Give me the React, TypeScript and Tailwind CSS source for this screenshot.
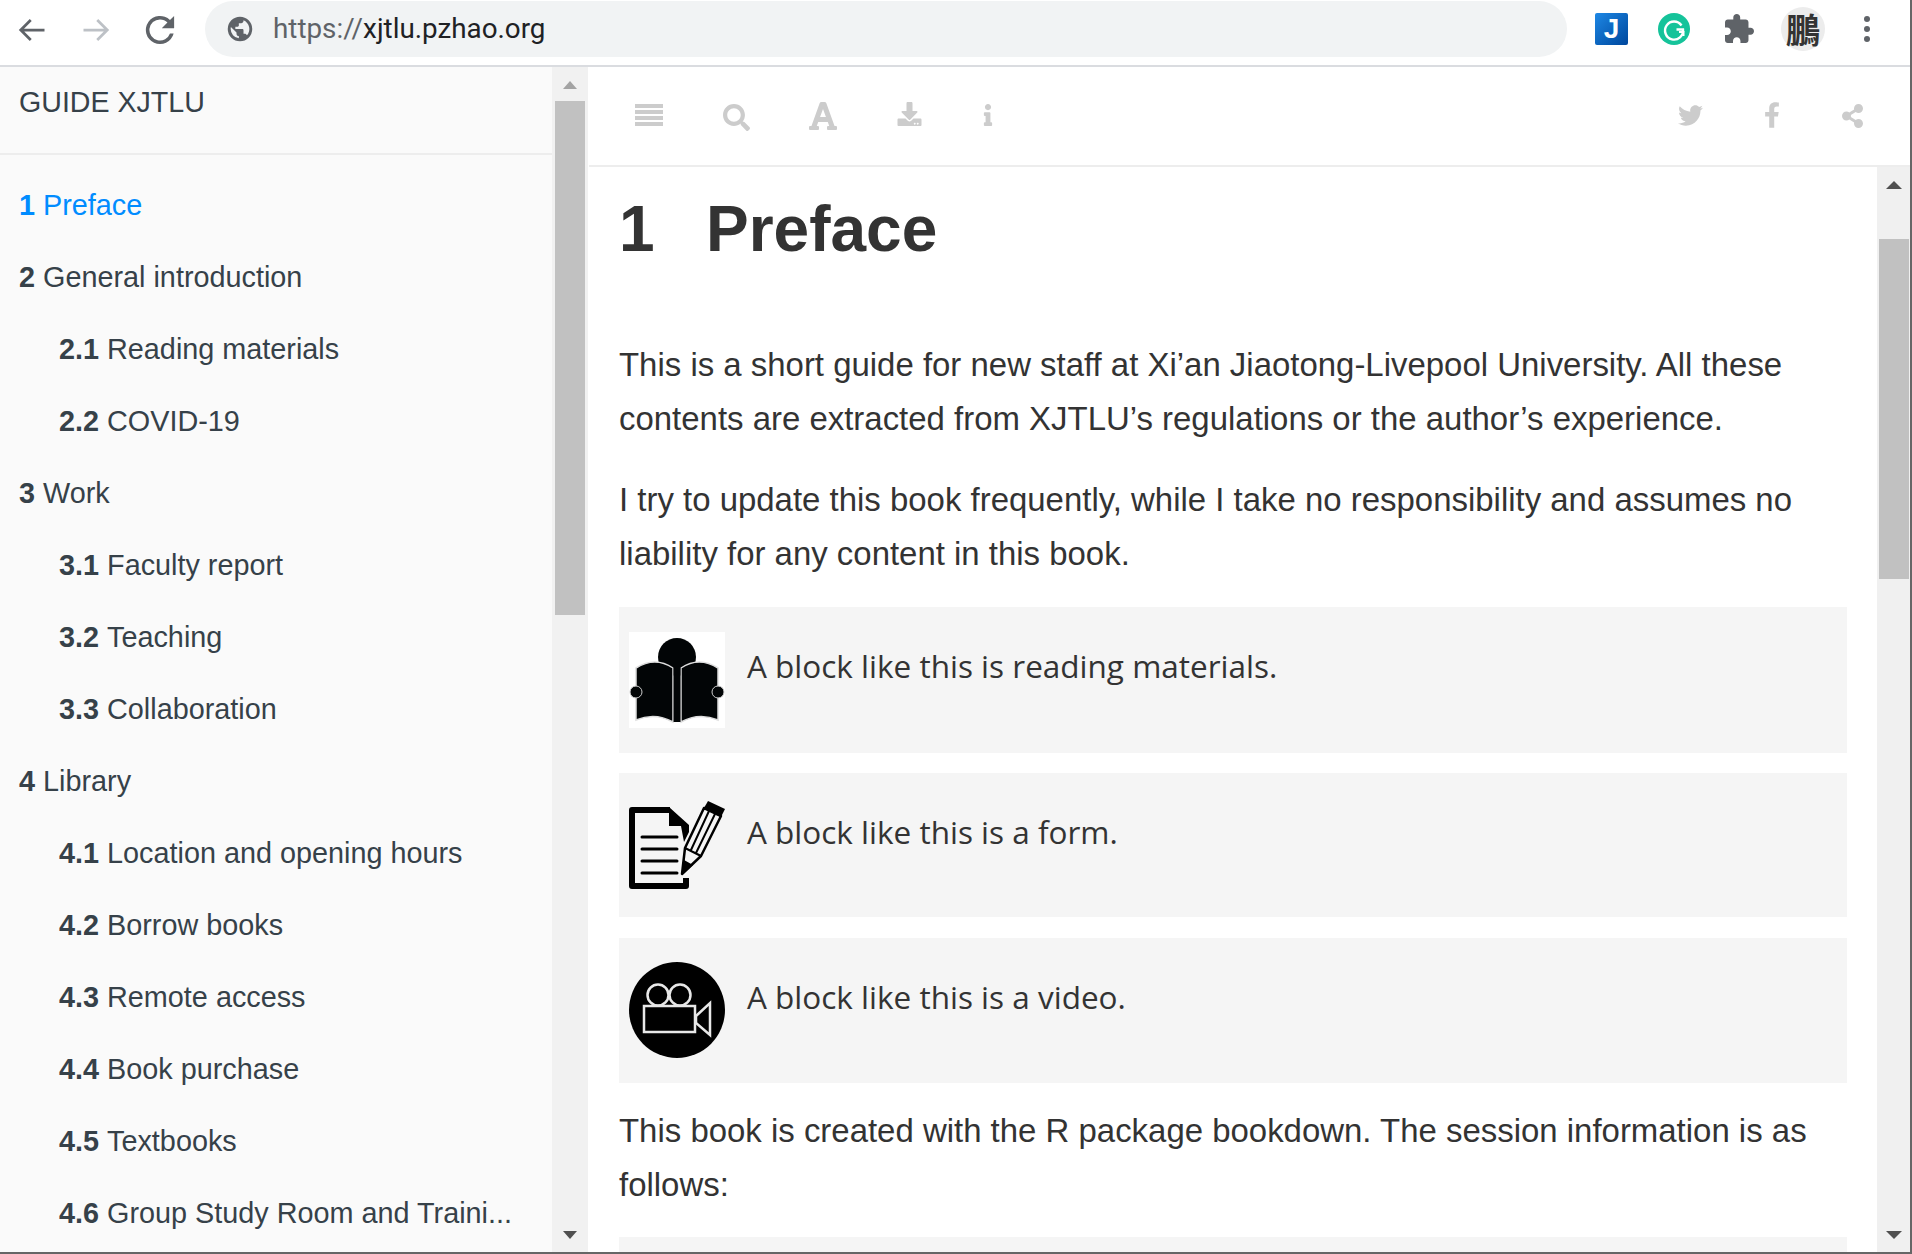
import React from "react";
import { FaTwitter, FaFacebookF, FaShareAlt, FaSearch, FaFont, FaInfo, FaDownload } from "react-icons/fa";

const toc: { num: string; label: string; sub?: boolean; active?: boolean }[] = [
  { num: "1", label: "Preface", active: true },
  { num: "2", label: "General introduction" },
  { num: "2.1", label: "Reading materials", sub: true },
  { num: "2.2", label: "COVID-19", sub: true },
  { num: "3", label: "Work" },
  { num: "3.1", label: "Faculty report", sub: true },
  { num: "3.2", label: "Teaching", sub: true },
  { num: "3.3", label: "Collaboration", sub: true },
  { num: "4", label: "Library" },
  { num: "4.1", label: "Location and opening hours", sub: true },
  { num: "4.2", label: "Borrow books", sub: true },
  { num: "4.3", label: "Remote access", sub: true },
  { num: "4.4", label: "Book purchase", sub: true },
  { num: "4.5", label: "Textbooks", sub: true },
  { num: "4.6", label: "Group Study Room and Traini...", sub: true },
];

function ReaderIcon() {
  return (
    <svg viewBox="0 0 96 96" className="w-[96px] h-[96px] bg-white shrink-0">
      <circle cx="48" cy="25" r="19" fill="#020506" />
      <path d="M7 36 Q26 24 44 36 L44 90 Q26 80 7 88 Z" fill="#020506" stroke="#ddd" strokeWidth="1.5" />
      <path d="M89 36 Q70 24 52 36 L52 90 Q70 80 89 88 Z" fill="#020506" stroke="#ddd" strokeWidth="1.5" />
      <rect x="44.5" y="35" width="7" height="55" fill="#020506" />
      <circle cx="7" cy="60" r="6" fill="#020506" stroke="#ccc" strokeWidth="1" />
      <circle cx="89" cy="60" r="6" fill="#020506" stroke="#ccc" strokeWidth="1" />
    </svg>
  );
}

function FormIcon() {
  return (
    <svg viewBox="0 0 96 96" className="w-[96px] h-[96px] shrink-0">
      <path d="M57 80 V88 H3 V12 H41" fill="none" stroke="#000" strokeWidth="6" strokeLinejoin="round" />
      <path d="M40 9 L60 27 V34 L55 44 L52 28 H40 Z" fill="#000" />
      <path d="M13 39 H48 M13 51 H48 M13 63 H48 M13 75 H48" stroke="#000" strokeWidth="3" strokeLinecap="round" />
      <path d="M75 10 L92 18 L72 58 L53 76 L56 50 Z" fill="#f5f5f5" stroke="#000" strokeWidth="2.5" strokeLinejoin="round" />
      <path d="M80 13 L62 52 M86 16 L67 55 M56 50 L72 58" fill="none" stroke="#000" strokeWidth="2" />
      <path d="M79 3 L96 11 L92 19 L75 10 Z" fill="#000" />
      <path d="M53 77 L55 62 L64 67 Z" fill="#000" />
    </svg>
  );
}

function VideoIcon() {
  return (
    <svg viewBox="0 0 96 96" className="w-[96px] h-[96px] -mt-[1px] shrink-0">
      <circle cx="48" cy="48" r="48" fill="#000" />
      <g fill="none" stroke="#e8e8e8" strokeWidth="2.5">
        <circle cx="29" cy="33" r="10.5" />
        <circle cx="51" cy="33" r="10.5" />
        <rect x="15" y="44" width="51" height="26" />
        <path d="M67 54 L81 41 V73 L67 61 Z" />
      </g>
    </svg>
  );
}

function Note({ icon, text, cls }: { icon: React.ReactNode; text: string; cls: string }) {
  return (
    <div className={`flex bg-[#f5f5f5] pl-[10px] pt-[25px] ${cls}`}>
      {icon}
      <span className="ml-[22px] mt-[7px] h-[54px] text-[31.5px] leading-[54px] font-['Open_Sans',sans-serif] text-[#333]">{text}</span>
    </div>
  );
}

export default function App() {
  return (
    <div className="w-[1912px] h-[1254px] overflow-hidden flex flex-col bg-white border-r-2 border-[#666] font-['Liberation_Sans',sans-serif]">
      {/* browser chrome */}
      <div className="h-[67px] shrink-0 flex items-start border-b-2 border-[#dadce0]">
        <div className="flex items-center h-[57px] pl-[17px] mt-[1px] gap-[34px] w-[205px]">
          <svg viewBox="0 0 24 24" className="w-[30px] h-[30px]" fill="none" stroke="#5f6368" strokeWidth="2.2"><path d="M22 12H3M11 4l-8 8 8 8" /></svg>
          <svg viewBox="0 0 24 24" className="w-[30px] h-[30px]" fill="none" stroke="#bdc1c6" strokeWidth="2.2"><path d="M2 12h19M13 4l8 8-8 8" /></svg>
          <svg viewBox="3.5 3.5 17 17" className="w-[30px] h-[30px]" fill="#5f6368"><path d="M17.65 6.35A8 8 0 1 0 19.73 14h-2.08A6 6 0 1 1 12 6c1.66 0 3.14.69 4.22 1.78L13 11h7V4l-2.35 2.35z" /></svg>
        </div>
        <div className="w-[1362px] h-[56px] mt-[1px] rounded-[28px] bg-[#f1f3f4] flex items-center pl-[21px]">
          <svg viewBox="0 0 24 24" className="w-[28px] h-[28px]" fill="#5f6368"><path d="M12 1.5a10.5 10.5 0 1 0 0 21 10.5 10.5 0 0 0 0-21zM4 12c0-.6.07-1.2.2-1.8L9 15v1c0 1.1.9 2 2 2v1.9A8 8 0 0 1 4 12zm13.9 5.4c-.26-.8-1-1.4-1.9-1.4h-1v-3c0-.55-.45-1-1-1H8v-2h2c.55 0 1-.45 1-1V7h2c1.1 0 2-.9 2-2v-.4a8 8 0 0 1 2.9 12.8z" /></svg>
          <span className="ml-[19px] text-[27.8px] font-['Roboto',sans-serif] text-[#5f6368]">https://<span className="text-[#202124]">xjtlu.pzhao.org</span></span>
        </div>
        <div className="flex-1 relative h-[65px]">
          <div className="absolute left-[28px] top-[13px] w-[33px] h-[32px] rounded-[2px] bg-gradient-to-br from-[#1e88e5] to-[#01479d] flex items-center justify-center text-white font-bold text-[28px] font-['Liberation_Sans',sans-serif]">J</div>
          <svg viewBox="0 0 32 32" className="absolute left-[91px] top-[13px] w-[32px] h-[32px]"><circle cx="16" cy="16" r="16" fill="#15c39a" /><path d="M23.5 12.5A9 9 0 1 0 25 16.5h-6.5" fill="none" stroke="#fff" strokeWidth="2.4" /><path d="M21 19l4.5 0-0 4" fill="none" stroke="#fff" strokeWidth="2" /></svg>
          <svg viewBox="2 1 21 21" className="absolute left-[158px] top-[14px] w-[29px] h-[29px]" fill="#5f6368"><path d="M20.5 11H19V7c0-1.1-.9-2-2-2h-4V3.5C13 2.12 11.88 1 10.5 1S8 2.12 8 3.5V5H4c-1.1 0-1.99.9-1.99 2v3.8H3.5c1.49 0 2.7 1.21 2.7 2.7s-1.21 2.7-2.7 2.7H2V20c0 1.1.9 2 2 2h3.8v-1.5c0-1.49 1.21-2.7 2.7-2.7 1.49 0 2.7 1.21 2.7 2.7V22H17c1.1 0 2-.9 2-2v-4h1.5c1.38 0 2.5-1.12 2.5-2.5S21.88 11 20.5 11z" /></svg>
          <div className="absolute left-[214px] top-[7px] w-[44px] h-[44px] rounded-full bg-[#ececec] flex items-center justify-center text-[#333] text-[34px] leading-none font-['Noto_Sans_CJK_TC',sans-serif] font-bold">鵬</div>
          <div className="absolute left-[297px] top-[16px] flex flex-col gap-[4px]">
            <div className="w-[6px] h-[6px] rounded-full bg-[#5f6368]" />
            <div className="w-[6px] h-[6px] rounded-full bg-[#5f6368]" />
            <div className="w-[6px] h-[6px] rounded-full bg-[#5f6368]" />
          </div>
        </div>
      </div>

      <div className="flex-1 flex min-h-0">
        {/* sidebar */}
        <div className="w-[552px] shrink-0 bg-[#fafafa] overflow-hidden">
          <div className="h-[88px] border-b-2 border-[#ededed] pl-[19px] pt-[15px] text-[28.6px] leading-[40px] text-[#364149]">GUIDE XJTLU</div>
          <ul className="pt-[15px]">
            {toc.map((item) => (
              <li
                key={item.num}
                className={`h-[72px] flex items-center text-[28.8px] whitespace-nowrap ${item.sub ? "pl-[59px]" : "pl-[19px]"} ${item.active ? "text-[#008cff]" : "text-[#364149]"}`}
              >
                <b className="mr-[8px]">{item.num}</b>
                {item.label}
              </li>
            ))}
          </ul>
        </div>
        {/* sidebar scrollbar */}
        <div className="w-[36px] shrink-0 bg-[#f1f1f1] flex flex-col items-center relative">
          <div className="w-0 h-0 mt-[14px] border-x-[7px] border-x-transparent border-b-[8px] border-b-[#a3a3a3]" />
          <div className="w-[30px] h-[514px] mt-[12px] bg-[#c1c1c1]" />
          <div className="absolute bottom-[13px] w-0 h-0 border-x-[7px] border-x-transparent border-t-[8px] border-t-[#505050]" />
        </div>
        {/* main */}
        <div className="flex-1 flex flex-col min-w-0 ml-[1px]">
          <div className="h-[100px] shrink-0 border-b-2 border-[#ededed] relative text-[#cccccc]">
            <svg viewBox="0 0 28 22" className="absolute left-[46px] top-[37px] w-[28px] h-[22px]" fill="#cccccc">
              <rect width="28" height="4" />
              <rect y="6" width="28" height="4" />
              <rect y="12" width="28" height="4" />
              <rect y="18" width="28" height="4" />
            </svg>
            <FaSearch className="absolute left-[134px] top-[37px] w-[27px] h-[27px]" />
            <FaFont className="absolute left-[218px] top-[33px] w-[32px] h-[32px]" />
            <FaDownload className="absolute left-[307px] top-[35px] w-[27px] h-[24px]" />
            <FaInfo className="absolute left-[393px] top-[37px] w-[12px] h-[22px]" />
            <FaTwitter className="absolute left-[1089px] top-[36px] w-[25px] h-[25px]" />
            <FaFacebookF className="absolute left-[1175px] top-[35px] w-[16px] h-[26px]" />
            <FaShareAlt className="absolute left-[1251px] top-[37px] w-[25px] h-[24px]" />
          </div>
          <div className="flex-1 flex min-h-0">
            <div className="flex-1 min-w-0 pl-[30px] pr-[30px] overflow-hidden">
              <h1 className="mt-[25px] text-[64px] leading-[74px] font-bold text-[#333] flex">
                <span className="w-[87px]">1</span>Preface
              </h1>
              <p className="mt-[72px] text-[32.95px] leading-[54px] text-[#333] whitespace-nowrap">This is a short guide for new staff at Xi’an Jiaotong-Livepool University. All these<br />contents are extracted from XJTLU’s regulations or the author’s experience.</p>
              <p className="mt-[27px] text-[32.95px] leading-[54px] text-[#333] whitespace-nowrap">I try to update this book frequently, while I take no responsibility and assumes no<br />liability for any content in this book.</p>
              <Note icon={<ReaderIcon />} text="A block like this is reading materials." cls="mt-[26px] h-[146px]" />
              <Note icon={<FormIcon />} text="A block like this is a form." cls="mt-[20px] h-[144px]" />
              <Note icon={<VideoIcon />} text="A block like this is a video." cls="mt-[21px] h-[145px]" />
              <p className="mt-[21px] text-[32.95px] leading-[54px] text-[#333] whitespace-nowrap">This book is created with the R package bookdown. The session information is as<br />follows:</p>
              <div className="mt-[25px] h-[40px] bg-[#f5f5f5]" />
            </div>
            <div className="w-[33px] shrink-0 bg-[#f0f0f0] flex flex-col items-center relative">
              <div className="w-0 h-0 mt-[14px] border-x-[8px] border-x-transparent border-b-[8px] border-b-[#505050]" />
              <div className="w-[30px] h-[340px] mt-[50px] bg-[#c1c1c1]" />
              <div className="absolute bottom-[13px] w-0 h-0 border-x-[8px] border-x-transparent border-t-[8px] border-t-[#505050]" />
            </div>
          </div>
        </div>
      </div>
      <div className="h-[2px] shrink-0 bg-[#666]" />
    </div>
  );
}
